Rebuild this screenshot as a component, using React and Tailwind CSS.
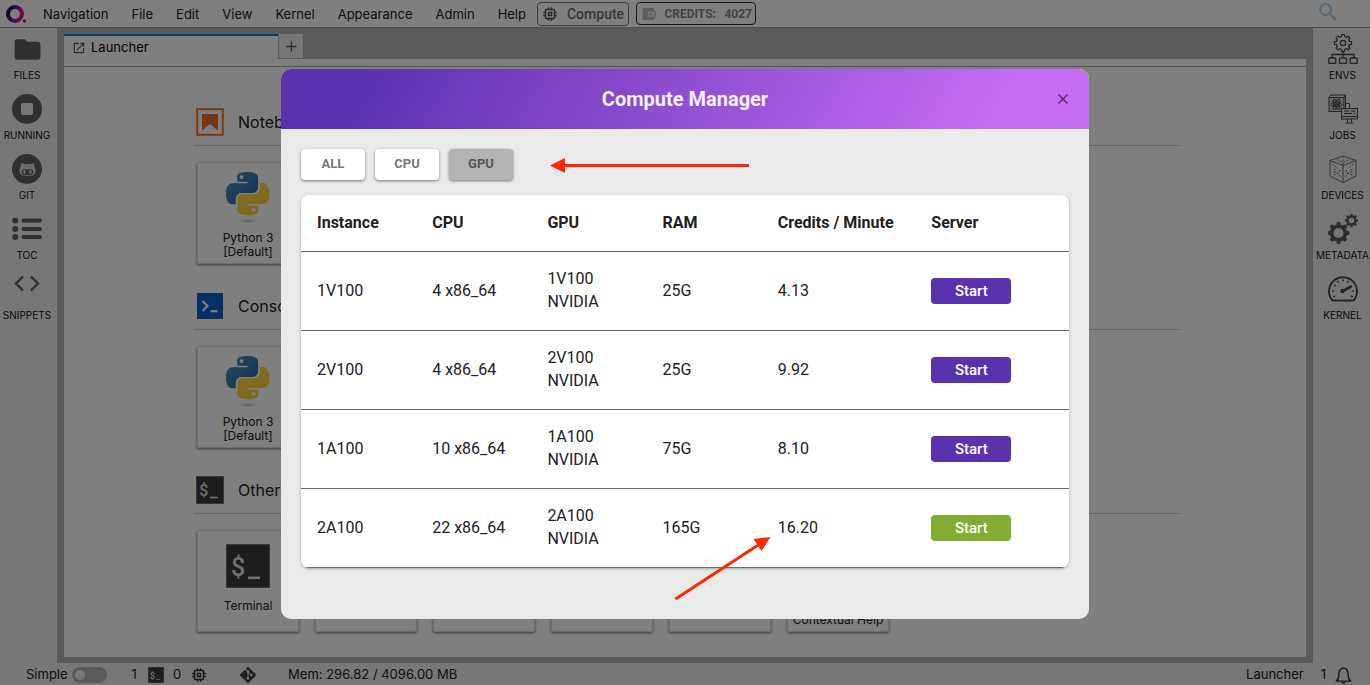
import React from "react";
import { MdLaunch, MdMemory, MdSearch, MdFolder } from "react-icons/md";
import { FaGithubAlt } from "react-icons/fa";
import { SiGit } from "react-icons/si";

const MENUS = ["Navigation", "File", "Edit", "View", "Kernel", "Appearance", "Admin", "Help"];

const INSTANCES = [
  { name: "1V100", cpu: "4 x86_64", gpu: "1V100 NVIDIA", ram: "25G", credits: "4.13", active: false },
  { name: "2V100", cpu: "4 x86_64", gpu: "2V100 NVIDIA", ram: "25G", credits: "9.92", active: false },
  { name: "1A100", cpu: "10 x86_64", gpu: "1A100 NVIDIA", ram: "75G", credits: "8.10", active: false },
  { name: "2A100", cpu: "22 x86_64", gpu: "2A100 NVIDIA", ram: "165G", credits: "16.20", active: true },
];

function gearPath(cx, cy, outer, inner, teeth) {
  const pts = [];
  const step = (Math.PI * 2) / teeth;
  for (let i = 0; i < teeth; i++) {
    const a = i * step;
    [
      [inner, -0.3],
      [outer, -0.19],
      [outer, 0.19],
      [inner, 0.3],
    ].forEach(([r, f]) => {
      const t = a + f * step;
      pts.push(`${(cx + r * Math.cos(t)).toFixed(2)} ${(cy + r * Math.sin(t)).toFixed(2)}`);
    });
  }
  return `M${pts.join("L")}Z`;
}

function circlePath(cx, cy, r) {
  return `M${cx - r} ${cy}a${r} ${r} 0 1 0 ${2 * r} 0a${r} ${r} 0 1 0 ${-2 * r} 0Z`;
}

function Logo() {
  return (
    <svg width="22" height="22" viewBox="0 0 22 22" aria-hidden="true">
      <defs>
        <linearGradient id="logoRing" x1="0" y1="0.3" x2="1" y2="0.7">
          <stop offset="0.1" stopColor="#1c0a4a" />
          <stop offset="0.5" stopColor="#8c14c8" />
          <stop offset="1" stopColor="#e6147a" />
        </linearGradient>
      </defs>
      <circle cx="10" cy="11" r="7" fill="none" stroke="url(#logoRing)" strokeWidth="4" />
      <circle cx="19.5" cy="18" r="1.8" fill="#e6147a" />
    </svg>
  );
}

function RunningIcon() {
  return (
    <svg width="30" height="30" viewBox="0 0 30 30" aria-hidden="true">
      <circle cx="15" cy="15" r="15" fill="#616161" />
      <rect x="9" y="9" width="12" height="12" rx="2" fill="#eee" />
    </svg>
  );
}

function GitFaceIcon() {
  return (
    <span className="flex h-[30px] w-[30px] items-center justify-center rounded-full bg-[#616161]">
      <FaGithubAlt size={17} color="#d8d8d8" />
    </span>
  );
}

function TocIcon() {
  return (
    <svg width="30" height="30" viewBox="0 0 30 30" fill="#616161" aria-hidden="true">
      {[6.5, 15, 23].map((y) => (
        <g key={y}>
          <circle cx="3.2" cy={y} r="3" />
          <rect x="9.5" y={y - 2} width="20.5" height="4" rx="2" />
        </g>
      ))}
    </svg>
  );
}

function SnippetsIcon() {
  return (
    <svg width="30" height="30" viewBox="0 0 30 30" fill="none" stroke="#616161" strokeWidth="2.4" aria-hidden="true">
      <path d="M11 2.5L4 9.500l7 7M19 2.500l7 7-7 7" />
    </svg>
  );
}

function EnvsIcon() {
  return (
    <svg width="30" height="30" viewBox="0 0 30 30" fill="none" stroke="#4a4a4a" strokeWidth="1.3" strokeLinejoin="round" aria-hidden="true">
      <path d={gearPath(15, 9, 8.600, 6.700, 8)} />
      <circle cx="15" cy="9" r="2.600" />
      <path d="M15 17.500v6M4 24v-3.500h22V24" />
      <rect x="0.800" y="24" width="7" height="5.500" rx="1" />
      <rect x="11.500" y="24" width="7" height="5.500" rx="1" />
      <rect x="22.200" y="24" width="7" height="5.500" rx="1" />
    </svg>
  );
}

function JobsIcon() {
  return (
    <svg width="30" height="30" viewBox="0 0 30 30" fill="none" stroke="#4a4a4a" strokeWidth="1" aria-hidden="true">
      <path d="M1 3.500L3 1h14.500v13.500L16 17M16 3.500L17.500 1" />
      <rect x="1" y="3.500" width="15" height="14" fill="#cfcfcf" />
      <ellipse cx="8.500" cy="10.500" rx="5.500" ry="2.200" />
      <ellipse cx="8.500" cy="10.500" rx="5.500" ry="2.200" transform="rotate(60 8.500 10.500)" />
      <ellipse cx="8.500" cy="10.500" rx="5.500" ry="2.200" transform="rotate(120 8.500 10.500)" />
      <circle cx="8.500" cy="10.500" r="1" fill="#4a4a4a" />
      <path d="M18 9.500h3.500V14" />
      <rect x="13.500" y="14.500" width="16" height="10.500" fill="#e0e0e0" />
      <path d="M13.500 22.500h16M19.500 25v3.500M23.500 25v3.500M17.500 29h8M16 17h5M16 19.500h8M23 17h4M26 19.500h1.500" />
    </svg>
  );
}

function DevicesIcon() {
  return (
    <svg width="30" height="30" viewBox="0 0 30 30" fill="none" stroke="#5c5c5c" strokeWidth="0.900" aria-hidden="true">
      <path d="M15 2L28 6.500v15.500L15 28.500 2 22V6.500ZM2 6.500L15 11.500l13-5M15 11.500v17" />
      <path
        strokeDasharray="2 1.500"
        d="M4.500 10l4 3.500-3 4 5 2 2-4M6 21l4-2 3 5M25.500 10l-4 3.500 3 4-5 2-2-4M24 21l-4-2-3 5M9 5.500l6 3 6-3M15 2v9"
      />
    </svg>
  );
}

function MetadataIcon() {
  return (
    <svg width="30" height="30" viewBox="0 0 30 30" fill="#5a5a5a" fillRule="evenodd" aria-hidden="true">
      <path d={gearPath(10.5, 19, 11, 8.800, 8) + circlePath(10.5, 19, 5)} />
      <path d={gearPath(23.5, 6.500, 6.800, 5.200, 8) + circlePath(23.5, 6.500, 2.700)} />
    </svg>
  );
}

function KernelIcon() {
  return (
    <svg width="30" height="30" viewBox="0 0 30 30" fill="none" stroke="#484848" strokeLinecap="round" aria-hidden="true">
      <path strokeWidth="1.900" strokeLinejoin="round" d="M4.500 26.500A14 14 0 1 1 25.500 26.500Z" />
      <path strokeWidth="2.600" d="M15 17l8-4.500" />
      <circle cx="14.500" cy="17" r="2.200" fill="#484848" stroke="none" />
      <path strokeWidth="1.700" d="M5 17h.6M6.500 11.500l.4.300M10 7.500l.3.400M15 6v.5M20 7.500l-.3.400M24.500 17h.6M6 22.500l.4-.200M24 22.500l-.4-.200" />
    </svg>
  );
}

function BellIcon() {
  return (
    <svg width="17" height="17" viewBox="0 0 16 16" fill="#333" aria-hidden="true">
      <path d="M8 .29c-1.400 0-2.700.73-3.600 1.800-1.200 1.500-1.400 3.400-1.500 5.200-.18 2.200-.44 4-2.300 5.300l.28 1.300h5c.026.66.32 1.100.71 1.500.84.61 2 .61 2.800 0 .52-.4.6-1 .71-1.500h5l.28-1.300c-1.900-.97-2.200-3.300-2.300-5.300-.13-1.800-.26-3.700-1.500-5.200-.85-1-2.200-1.800-3.600-1.800zm0 1.400c.88 0 1.900.55 2.500 1.300.88 1.100 1.100 2.700 1.200 4.400.13 1.700.23 3.600 1.300 5.200h-10c1.100-1.600 1.200-3.400 1.300-5.200.13-1.700.3-3.300 1.200-4.400.59-.72 1.600-1.300 2.500-1.300zm-.74 12h1.500c-.0015.28.015.79-.74.79-.73.0016-.72-.53-.74-.79z" />
    </svg>
  );
}

function WalletIcon() {
  return (
    <svg width="14" height="14" viewBox="0 0 14 14" aria-hidden="true">
      <rect x="0.500" y="1" width="12" height="12" rx="1.500" fill="#bdbdbd" />
      <rect x="5.500" y="4" width="8" height="6.500" rx="1" fill="#e8e8e8" stroke="#bdbdbd" />
      <circle cx="8.800" cy="7.200" r="1.200" fill="#aaa" />
    </svg>
  );
}

function NotebookIcon() {
  return (
    <svg width="28" height="28" viewBox="0 0 28 28" aria-hidden="true">
      <rect x="1.200" y="1.200" width="25.600" height="25.600" fill="none" stroke="#f37726" strokeWidth="2" />
      <path d="M6 6h16v16.500l-8-6.500-8 6.500Z" fill="#ec6a24" />
    </svg>
  );
}

function ConsoleIcon() {
  return (
    <svg width="28" height="28" viewBox="0 0 28 28" aria-hidden="true">
      <rect x="1" y="1" width="26" height="26" fill="#0d5fd0" />
      <path d="M6.500 9l5 5-5 5" fill="none" stroke="#fff" strokeWidth="2.200" />
      <path d="M14.500 19.200h7" stroke="#fff" strokeWidth="2.200" />
    </svg>
  );
}

function TerminalIcon({ size }) {
  return (
    <svg width={size} height={size} viewBox="0 0 44 44" aria-hidden="true">
      <rect x="0.500" y="0.500" width="43" height="43" fill="#3a3a3a" stroke="#6a6a6a" />
      <text x="5" y="32" fontSize="25" fontWeight="500" fontFamily="Roboto, sans-serif" fill="#e0e0e0">
        $
      </text>
      <rect x="22" y="32.500" width="12" height="2.600" fill="#e0e0e0" />
    </svg>
  );
}

function PythonIcon() {
  return (
    <svg width="44" height="52" viewBox="0 0 44 52" aria-hidden="true">
      <defs>
        <linearGradient id="pyBlue" x1="0" y1="0" x2="1" y2="1">
          <stop offset="0" stopColor="#4a93cc" />
          <stop offset="1" stopColor="#2a5f93" />
        </linearGradient>
        <linearGradient id="pyYellow" x1="1" y1="1" x2="0" y2="0">
          <stop offset="0" stopColor="#ffcb2b" />
          <stop offset="1" stopColor="#ffdf55" />
        </linearGradient>
        <radialGradient id="pyShade">
          <stop offset="0" stopColor="#b8b8b8" />
          <stop offset="1" stopColor="#ffffff" stopOpacity="0" />
        </radialGradient>
      </defs>
      <ellipse cx="22" cy="49" rx="11" ry="2.500" fill="url(#pyShade)" />
      <g transform="scale(1.800)">
        <path
          fill="url(#pyBlue)"
          d="M14.250.18l.9.2.73.26.59.3.45.32.34.34.25.34.16.33.1.3.04.26.02.2-.01.13V8.500l-.05.63-.13.55-.21.46-.26.38-.3.31-.33.25-.35.19-.35.14-.33.1-.3.07-.26.04-.21.02H8.770l-.69.05-.59.14-.5.22-.41.27-.33.32-.27.35-.2.36-.15.37-.1.35-.07.32-.04.27-.02.21v3.060H3.170l-.21-.03-.28-.07-.32-.12-.35-.18-.36-.26-.36-.36-.35-.46-.32-.59-.28-.73-.21-.88-.14-1.050-.05-1.230.06-1.220.16-1.040.24-.87.32-.71.36-.57.4-.44.42-.33.42-.24.4-.16.36-.1.32-.05.24-.01h.16l.06.01h8.160v-.83H6.180l-.01-2.750-.02-.37.05-.34.11-.31.17-.28.25-.26.31-.23.38-.2.44-.18.51-.15.58-.12.64-.1.71-.06.77-.04.84-.02 1.270.05zm-6.300 1.980l-.23.33-.08.41.08.41.23.34.33.22.41.09.41-.09.33-.22.23-.34.08-.41-.08-.41-.23-.33-.33-.22-.41-.09-.41.09z"
        />
        <path
          fill="url(#pyYellow)"
          d="M21.100 6.110l.28.06.32.12.35.18.36.27.36.35.35.47.32.59.28.73.21.88.14 1.040.05 1.230-.06 1.230-.16 1.040-.24.86-.32.71-.36.57-.4.45-.42.33-.42.24-.4.16-.36.09-.32.05-.24.02-.16-.01h-8.220v.82h5.840l.01 2.760.02.36-.05.34-.11.31-.17.29-.25.25-.31.24-.38.2-.44.17-.51.15-.58.13-.64.09-.71.07-.77.04-.84.01-1.270-.04-1.070-.14-.9-.2-.73-.25-.59-.3-.45-.33-.34-.34-.25-.34-.16-.33-.1-.3-.04-.25-.02-.2.01-.13v-5.340l.05-.64.13-.54.21-.46.26-.38.3-.32.33-.24.35-.2.35-.14.33-.1.3-.06.26-.04.21-.02.13-.01h5.840l.69-.05.59-.14.5-.21.41-.28.33-.32.27-.35.2-.36.15-.36.1-.35.07-.32.04-.28.02-.21V6.070h2.090l.14.01zm-6.470 14.250l-.23.33-.08.41.08.41.23.33.33.23.41.08.41-.08.33-.23.23-.33.08-.41-.08-.41-.23-.33-.33-.23-.41-.08-.41.08z"
        />
      </g>
    </svg>
  );
}

function SideItem({ icon, label }) {
  return (
    <button type="button" className="flex h-[60px] w-full flex-col items-center gap-[3px]">
      <span className="flex h-[30px] items-center justify-center">{icon}</span>
      <span className="text-[10px] leading-4 whitespace-nowrap text-[#111]">{label}</span>
    </button>
  );
}

function Card({ icon, children }) {
  return (
    <button
      type="button"
      className="flex h-[102px] w-[102px] flex-col items-center rounded-xs border border-[#e0e0e0] bg-white shadow-[0_1px_3px_rgba(0,0,0,0.55)]"
    >
      <span className="flex h-[68px] shrink-0 items-center justify-center pt-0.5">{icon}</span>
      <span className="text-xs leading-[14px] text-[#212121]">{children}</span>
    </button>
  );
}

function Section({ icon, title, children }) {
  return (
    <section className="flex flex-col gap-4">
      <div className="flex h-[38px] items-start gap-[14px] border-b border-[#d0d0d0] px-0.5">
        {icon}
        <h2 className="text-base leading-7 text-[#212121]">{title}</h2>
      </div>
      <div className="flex gap-4 px-[3px]">{children}</div>
    </section>
  );
}

function FilterButton({ children, active }) {
  return (
    <button
      type="button"
      aria-pressed={active}
      className={
        "h-[31px] w-16 rounded-sm pb-0.5 text-[13px] font-bold shadow-[0_1px_3px_rgba(0,0,0,0.5)] " +
        (active ? "bg-[#b3b3b3] text-[#555]" : "bg-white text-[#777]")
      }
    >
      {children}
    </button>
  );
}

function ComputeManager() {
  return (
    <div className="fixed inset-0 flex items-center justify-center bg-black/50 pt-[3px]">
      <div
        role="dialog"
        aria-modal="true"
        aria-labelledby="dialog-title"
        className="relative w-full max-w-[808px] overflow-hidden rounded-[10px] bg-[#eaeaea] font-[Roboto,sans-serif] text-[#212121]"
      >
        <header className="grid h-[60px] grid-cols-[1fr_auto_1fr] items-center bg-[linear-gradient(120deg,#5a32ae_10%,#c56cf3_88%)] px-5">
          <h1 id="dialog-title" className="col-start-2 text-[20px] font-bold text-[#f3f0f7]">
            Compute Manager
          </h1>
          <button type="button" aria-label="Close" className="justify-self-end">
            <svg width="12" height="12" viewBox="0 0 12 12" stroke="#5c2a7c" strokeWidth="1.500">
              <path d="M1.500 1.500l9 9M10.500 1.500l-9 9" />
            </svg>
          </button>
        </header>
        <div className="px-5 pt-5 pb-[51px]">
          <div className="mb-[15px] flex gap-[10px]">
            <FilterButton>ALL</FilterButton>
            <FilterButton>CPU</FilterButton>
            <FilterButton active>GPU</FilterButton>
          </div>
          <div className="overflow-hidden rounded-lg bg-white shadow-[0_1px_3px_rgba(0,0,0,0.3)]">
            <table className="w-full table-fixed border-collapse text-left text-base">
              <colgroup>
                <col className="w-[15%]" />
                <col className="w-[15%]" />
                <col className="w-[15%]" />
                <col className="w-[15%]" />
                <col className="w-[20%]" />
                <col className="w-[20%]" />
              </colgroup>
              <thead>
                <tr className="h-14 border-b border-[#6b6b6b]">
                  {["Instance", "CPU", "GPU", "RAM", "Credits / Minute", "Server"].map((h) => (
                    <th key={h} scope="col" className="px-4 font-bold whitespace-nowrap">
                      {h}
                    </th>
                  ))}
                </tr>
              </thead>
              <tbody>
                {INSTANCES.map((row) => (
                  <tr key={row.name} className="h-[79px] border-b border-[#6b6b6b] leading-[23px]">
                    <td className="px-4 pb-px">{row.name}</td>
                    <td className="px-4 pb-px">{row.cpu}</td>
                    <td className="px-4 pb-px">{row.gpu}</td>
                    <td className="px-4 pb-px">{row.ram}</td>
                    <td className="px-4 pb-px">{row.credits}</td>
                    <td className="px-4">
                      <button
                        type="button"
                        className={
                          "block h-[26px] w-20 rounded-sm text-[15px] leading-[26px] font-medium text-white " +
                          (row.active ? "bg-[#80ad32]" : "bg-[#5a32ae]")
                        }
                      >
                        Start
                      </button>
                    </td>
                  </tr>
                ))}
              </tbody>
            </table>
          </div>
        </div>
        <svg
          className="pointer-events-none absolute top-0 left-0"
          width="808"
          height="550"
          viewBox="0 0 808 550"
          fill="#ff2600"
          stroke="#ff2600"
          aria-hidden="true"
        >
          <path d="M282 96.500H468" strokeWidth="3" />
          <path d="M269 96.500L284 89V104Z" stroke="none" />
          <path d="M394.500 530L478 475.500" strokeWidth="3" />
          <path d="M489.500 468L472.500 470L480.500 482Z" stroke="none" />
        </svg>
      </div>
    </div>
  );
}

export default function App() {
  return (
    <div className="flex min-h-screen flex-col bg-[#eee] font-[Inter,sans-serif] text-[13px] text-[#212121]">
      <header className="flex h-7 items-center border-b border-[#a0a0a0] bg-white pl-[5px]">
        <Logo />
        <nav className="flex pl-1">
          {MENUS.map((m) => (
            <button key={m} type="button" className="pr-[11px] pl-3 leading-6">
              {m}
            </button>
          ))}
        </nav>
        <button
          type="button"
          className="flex h-6 w-[92px] items-center gap-2 rounded border border-[#7a7a7a] pl-[3px] font-[Roboto,sans-serif] text-sm font-medium text-[#707070]"
        >
          <MdMemory size={18} color="#555" />
          Compute
        </button>
        <div className="ml-[7px] flex h-[23px] w-[120px] items-center justify-between rounded border border-[#333] pr-[3px] pl-[5px] font-[Roboto,sans-serif] text-xs font-bold text-[#888]">
          <WalletIcon />
          <span>CREDITS:</span>
          <span>4027</span>
        </div>
        <button type="button" aria-label="Search" className="mr-[30px] ml-auto pb-[3px]">
          <MdSearch size={24} color="#b4d2e8" />
        </button>
      </header>

      <div className="flex flex-1">
        <aside className="flex w-[57px] shrink-0 flex-col pt-[6px] pr-[3px]">
          <SideItem icon={<MdFolder size={31} color="#616161" />} label="FILES" />
          <SideItem icon={<RunningIcon />} label="RUNNING" />
          <SideItem icon={<GitFaceIcon />} label="GIT" />
          <SideItem icon={<TocIcon />} label="TOC" />
          <SideItem icon={<SnippetsIcon />} label="SNIPPETS" />
        </aside>

        <div className="flex min-w-0 flex-1 flex-col bg-[#b5b5b5] px-[7px] pb-[6px]">
          <div className="flex h-[31px] items-end">
            <div className="flex h-[25px] w-[214px] items-center gap-[5px] border-t-2 border-[#1976d2] bg-white pl-2 text-black">
              <MdLaunch size={14} color="#555" />
              Launcher
            </div>
            <button
              type="button"
              aria-label="New launcher"
              className="ml-px flex h-[25px] w-6 items-center justify-center border-b border-[#b5b5b5] bg-[#eee]"
            >
              <svg width="11" height="11" viewBox="0 0 11 11" stroke="#555" strokeWidth="1.400">
                <path d="M5.500 0.500v10M0.500 5.500h10" />
              </svg>
            </button>
          </div>
          <div className="h-2 border-b border-[#a8a8a8] bg-white" />
          <main className="flex flex-1 flex-col gap-7 bg-white pt-[41px] pr-[125px] pb-6 pl-[130px]">
            <Section icon={<NotebookIcon />} title="Notebook">
              <Card icon={<PythonIcon />}>
                Python 3
                <br />
                [Default]
              </Card>
            </Section>
            <Section icon={<ConsoleIcon />} title="Console">
              <Card icon={<PythonIcon />}>
                Python 3
                <br />
                [Default]
              </Card>
            </Section>
            <Section icon={<TerminalIcon size={28} />} title="Other">
              <Card icon={<TerminalIcon size={44} />}>Terminal</Card>
              <Card />
              <Card />
              <Card />
              <Card />
              <Card>
                Show
                <br />
                Contextual Help
              </Card>
            </Section>
          </main>
        </div>

        <aside className="flex w-[57px] shrink-0 flex-col pt-[6px] pl-[2px]">
          <SideItem icon={<EnvsIcon />} label="ENVS" />
          <SideItem icon={<JobsIcon />} label="JOBS" />
          <SideItem icon={<DevicesIcon />} label="DEVICES" />
          <SideItem icon={<MetadataIcon />} label="METADATA" />
          <SideItem icon={<KernelIcon />} label="KERNEL" />
        </aside>
      </div>

      <footer className="flex h-[22px] items-center pt-0.5 pr-[18px] pl-[26px]">
        <label className="flex items-center gap-1">
          Simple
          <input
            type="checkbox"
            role="switch"
            className="h-4 w-[35px] appearance-none rounded-full bg-[#b5b5b5] p-[3px] before:block before:h-[10px] before:w-[10px] before:rounded-full before:bg-[#eee] before:content-['']"
          />
        </label>
        <span className="ml-[25px]">1</span>
        <span className="ml-[11px]">
          <TerminalIcon size={16} />
        </span>
        <span className="ml-[9px]">0</span>
        <MdMemory size={18} color="#333" className="ml-[9px]" />
        <SiGit size={16} color="#444" className="ml-8" />
        <span className="ml-8">Mem: 296.82 / 4096.00 MB</span>
        <span className="ml-auto">Launcher</span>
        <span className="mr-[9px] ml-[17px]">1</span>
        <BellIcon />
      </footer>

      <ComputeManager />
    </div>
  );
}
